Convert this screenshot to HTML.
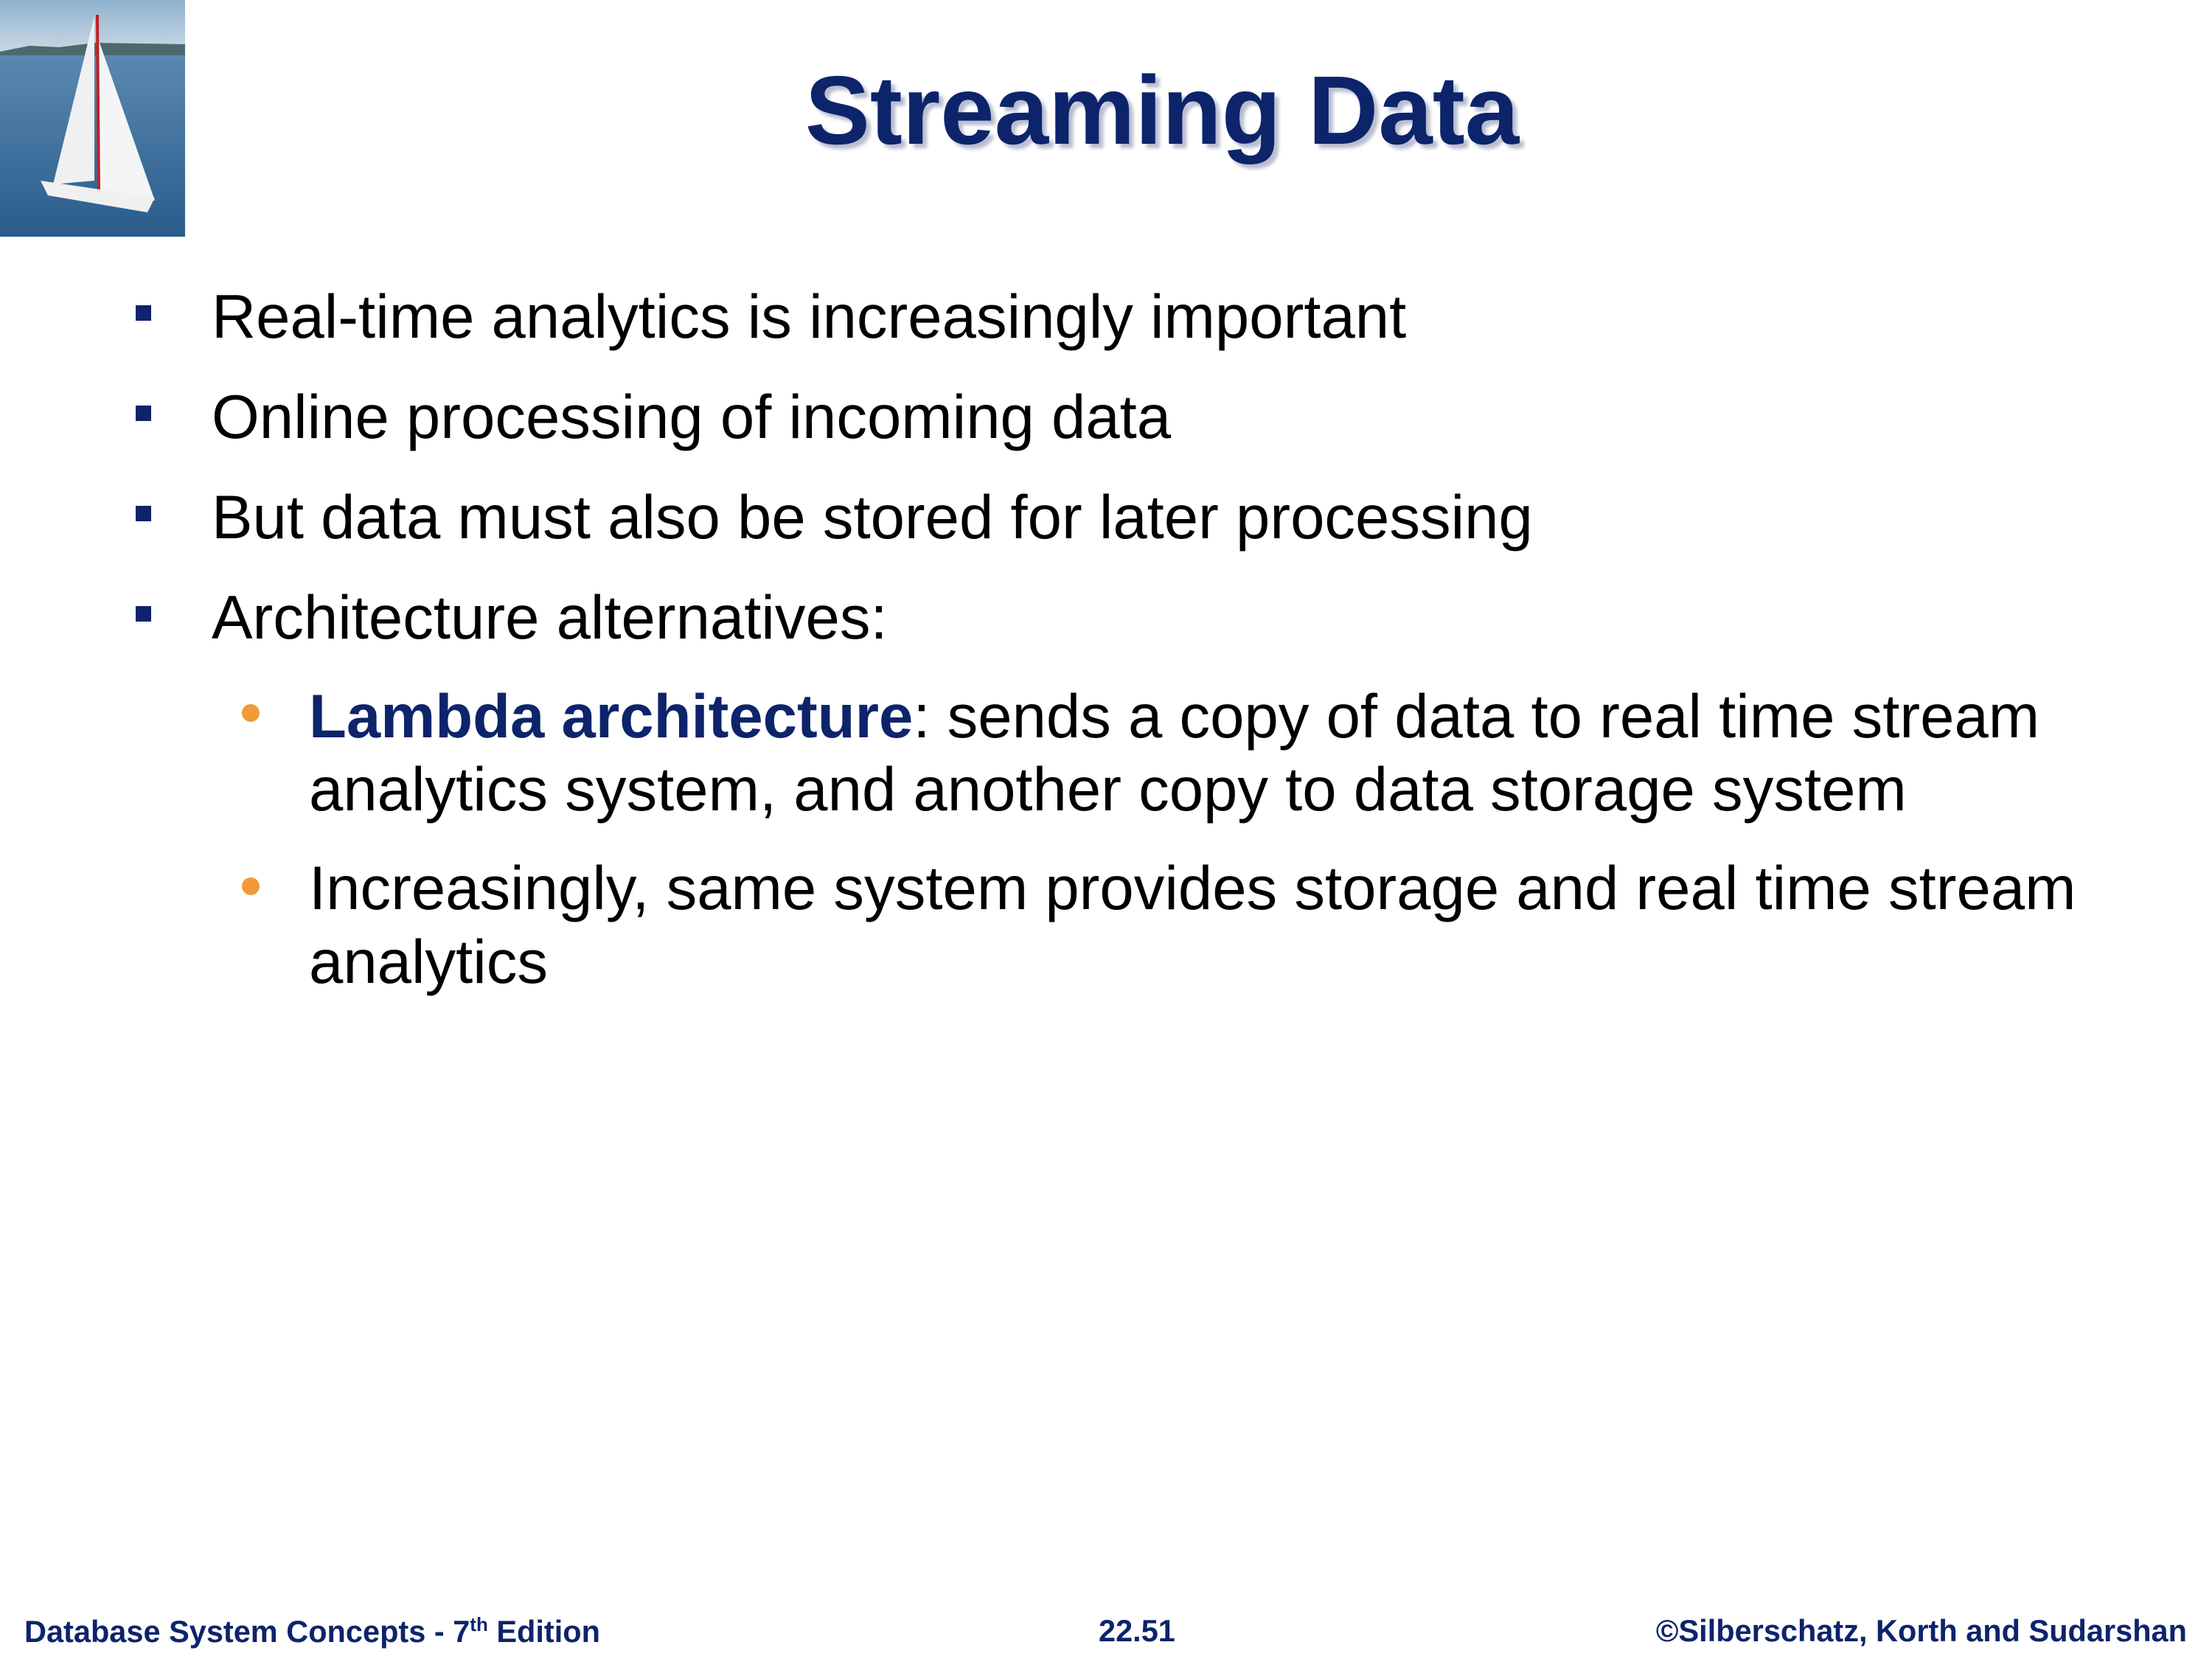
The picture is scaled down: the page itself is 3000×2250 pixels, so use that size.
<!DOCTYPE html>
<html><head><meta charset="utf-8"><style>
body{margin:0;width:3000px;height:2250px;background:#fff;position:relative;overflow:hidden;font-family:"Liberation Sans",Arial,sans-serif}
.t{position:absolute;white-space:nowrap}
#title{left:0;width:3152px;text-align:center;top:70px;font-size:132px;font-weight:bold;color:#0d246b;text-shadow:6px 6px 5px #b8bdd0;line-height:160px}
.b{font-size:83.3px;color:#000;line-height:100px}
.sq{position:absolute;width:21px;height:21px;background:#0d246b}
.dot{position:absolute;width:24px;height:24px;border-radius:50%;background:#f19a38}
.ft{top:2188px;font-size:41.5px;font-weight:bold;color:#0d246b}
</style></head><body>
<svg style="position:absolute;left:0;top:0" width="251" height="321" viewBox="0 0 251 321">
<defs><linearGradient id="sky" x1="0" y1="0" x2="0" y2="1"><stop offset="0" stop-color="#8fb2cf"/><stop offset="1" stop-color="#c9d8e4"/></linearGradient>
<linearGradient id="sea" x1="0" y1="0" x2="0" y2="1"><stop offset="0" stop-color="#5a88b0"/><stop offset="1" stop-color="#2a5c8c"/></linearGradient></defs>
<rect width="251" height="70" fill="url(#sky)"/>
<path d="M0 70 L40 62 L80 64 L130 58 L251 60 L251 75 L0 78Z" fill="#4c6a6e"/>
<rect y="75" width="251" height="246" fill="url(#sea)"/>
<path d="M128 22 L72 250 L128 245Z" fill="#eef0f2"/>
<path d="M134 55 L136 265 L210 272Z" fill="#f4f5f6"/>
<line x1="132" y1="20" x2="134" y2="270" stroke="#c02020" stroke-width="4"/>
<path d="M55 245 L210 268 L200 288 L65 265Z" fill="#f0f0f0"/>
</svg>
<div id="title" class="t">Streaming Data</div>
<div class="sq" style="left:184px;top:414px"></div>
<div class="sq" style="left:184px;top:550px"></div>
<div class="sq" style="left:184px;top:686px"></div>
<div class="sq" style="left:184px;top:822px"></div>
<div class="t b" style="left:287px;top:380px">Real-time analytics is increasingly important</div>
<div class="t b" style="left:287px;top:516px">Online processing of incoming data</div>
<div class="t b" style="left:287px;top:652px">But data must also be stored for later processing</div>
<div class="t b" style="left:287px;top:788px">Architecture alternatives:</div>
<div class="dot" style="left:328px;top:955px"></div>
<div class="dot" style="left:328px;top:1190px"></div>
<div class="t b" style="left:419px;top:922px"><b style="color:#0d246b">Lambda architecture</b>: sends a copy of data to real time stream</div>
<div class="t b" style="left:419px;top:1021px">analytics system, and another copy to data storage system</div>
<div class="t b" style="left:419px;top:1155px">Increasingly, same system provides storage and real time stream</div>
<div class="t b" style="left:419px;top:1255px">analytics</div>
<div class="t ft" style="left:33px">Database System Concepts - 7<sup style="font-size:26px">th</sup> Edition</div>
<div class="t ft" style="left:1490px">22.51</div>
<div class="t ft" style="right:34px">©Silberschatz, Korth and Sudarshan</div>
</body></html>
